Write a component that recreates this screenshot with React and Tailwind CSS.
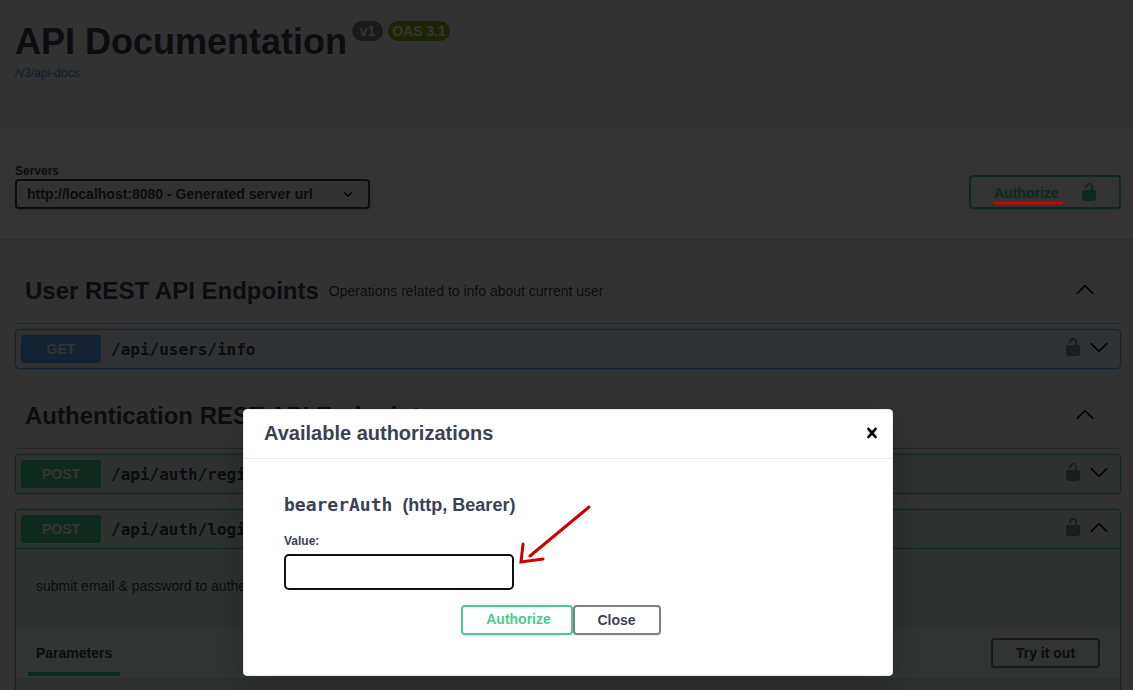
const ICONS = {
  up: "M 17.418 14.908 C 17.69 15.176 18.127 15.176 18.397 14.908 C 18.667 14.64 18.668 14.207 18.397 13.939 L 10.489 6.109 C 10.219 5.841 9.782 5.841 9.51 6.109 L 1.602 13.939 C 1.332 14.207 1.332 14.64 1.602 14.908 C 1.873 15.176 2.311 15.176 2.581 14.908 L 10 7.767 L 17.418 14.908 Z",
  down: "M17.418 6.109c.272-.268.709-.268.979 0s.271.701 0 .969l-7.908 7.83c-.27.268-.707.268-.979 0l-7.908-7.83c-.27-.268-.27-.701 0-.969.271-.268.709-.268.979 0L10 13.25l7.418-7.141z",
  select: "M13.418 7.859c.271-.268.709-.268.978 0 .27.268.272.701 0 .969l-3.908 3.83c-.27.268-.707.268-.979 0l-3.908-3.83c-.27-.267-.27-.701 0-.969.271-.268.709-.268.978 0L10 11l3.418-3.141z",
  unlocked: "M15.8 8H14V5.6C14 2.703 12.665 1 10 1 7.334 1 6 2.703 6 5.6V6h2v-.801C8 3.754 8.797 3 10 3c1.203 0 2 .754 2 2.199V8H4c-.553 0-1 .646-1 1.199V17c0 .549.428 1.139.951 1.307l1.197.387C5.672 18.861 6.55 19 7.1 19h5.8c.549 0 1.428-.139 1.951-.307l1.196-.387c.524-.167.953-.757.953-1.306V9.199C17 8.646 16.352 8 15.8 8z",
  close: "M14.348 14.849c-.469.469-1.229.469-1.697 0L10 11.819l-2.651 3.029c-.469.469-1.229.469-1.697 0-.469-.469-.469-1.229 0-1.697l2.758-3.15-2.759-3.152c-.469-.469-.469-1.228 0-1.697.469-.469 1.228-.469 1.697 0L10 8.183l2.651-3.031c.469-.469 1.228-.469 1.697 0 .469.469.469 1.229 0 1.697l-2.758 3.152 2.758 3.15c.469.469.469 1.229 0 1.698z",
};

function Icon({ name, className = "" }) {
  return (
    <svg viewBox="0 0 20 20" width="20" height="20" fill="currentColor" className={`shrink-0 ${className}`}>
      <path d={ICONS[name]} />
    </svg>
  );
}

function TagHeader({ title, description }) {
  return (
    <div className="flex h-[68px] items-center border-b border-[#3b4151]/30 pr-[26px] pl-2.5">
      <h3 className="pt-0.5 text-2xl font-bold whitespace-nowrap">{title}</h3>
      {description && <span className="ml-2.5 pt-0.5 text-sm">{description}</span>}
      <Icon name="up" className="mb-0.5 ml-auto text-black" />
    </div>
  );
}

function OperationSummary({ method, path, open, methodClass }) {
  return (
    <div className="flex h-[38px] items-center pr-[11px] pl-[5px]">
      <span className={`h-7 w-20 rounded-[3px] text-center text-sm leading-7 font-bold text-white [text-shadow:0_1px_0_rgba(0,0,0,0.1)] ${methodClass}`}>
        {method}
      </span>
      <span className="flex-1 pt-0.5 pl-2.5 font-['DejaVu_Sans_Mono',monospace] text-base font-semibold">{path}</span>
      <Icon name="unlocked" className="mr-1.5 mb-1 text-black/40" />
      <Icon name={open ? "up" : "down"} className="mb-1 text-black" />
    </div>
  );
}

function Page() {
  return (
    <div className="h-full">
      <header className="h-[131px] px-[15px] pt-[21px]">
        <div className="flex items-start">
          <h1 className="text-4xl leading-[41px] font-bold whitespace-nowrap">API Documentation</h1>
          <span className="ml-[5px] h-5 w-[31px] rounded-full bg-[#7d8492] text-center text-sm font-bold text-white">v1</span>
          <span className="ml-[5px] h-5 w-[62px] rounded-full bg-[#89bf04] text-center text-sm font-bold text-white">OAS 3.1</span>
        </div>
        <a className="mt-[3px] block text-xs text-[#4990e2]">/v3/api-docs</a>
      </header>

      <section className="flex h-[108px] justify-between bg-white pr-3 pl-[15px] shadow-[0_1px_2px_rgba(0,0,0,0.15)]">
        <div className="pt-8">
          <div className="text-xs leading-4 font-bold">Servers</div>
          <div className="flex h-[30px] w-[355px] items-center justify-between rounded border-2 border-[#41444e] bg-[#f7f7f7] pr-2.5 pl-2.5 text-sm font-bold shadow-[0_1px_2px_rgba(0,0,0,0.25)]">
            <span>http://localhost:8080 - Generated server url</span>
            <Icon name="select" className="text-black" />
          </div>
        </div>
        <button className="mt-11 flex h-[34px] w-[152px] items-center justify-between rounded border-2 border-[#49cc90] pr-5 pl-[23px] text-sm font-bold text-[#49cc90] shadow-[0_1px_2px_rgba(0,0,0,0.1)]">
          <span className="pt-0.5">Authorize</span>
          <Icon name="unlocked" />
        </button>
      </section>

      <main className="pt-[17px] pr-3 pl-[15px]">
        <TagHeader title="User REST API Endpoints" description="Operations related to info about current user" />
        <div className="mt-[5px] rounded border border-[#61affe] bg-[#61affe]/10 shadow-[0_0_3px_rgba(0,0,0,0.19)]">
          <OperationSummary method="GET" path="/api/users/info" methodClass="bg-[#61affe]" />
        </div>

        <div className="mt-3">
          <TagHeader title="Authentication REST API Endpoints" />
        </div>
        <div className="mt-[5px] rounded border border-[#49cc90] bg-[#49cc90]/10 shadow-[0_0_3px_rgba(0,0,0,0.19)]">
          <OperationSummary method="POST" path="/api/auth/register" methodClass="bg-[#49cc90]" />
        </div>

        <div className="mt-[15px] h-[260px] rounded border border-[#49cc90] bg-[#49cc90]/10 shadow-[0_0_3px_rgba(0,0,0,0.19)]">
          <OperationSummary method="POST" path="/api/auth/login" open methodClass="bg-[#49cc90]" />
          <div className="h-20 border-t border-[#49cc90] px-5 pt-[27px] text-sm">submit email &amp; password to authenticate</div>
          <div className="flex h-[50px] items-center justify-between bg-white/80 pr-5 pl-3 shadow-[0_1px_2px_rgba(0,0,0,0.1)]">
            <h4 className="flex h-full w-[92px] flex-col justify-between pt-[15px] pb-0.5 text-sm font-bold">
              <span className="pl-2">Parameters</span>
              <span className="h-1 bg-[#49cc90]" />
            </h4>
            <button className="h-[30px] w-[109px] rounded border-2 border-[#808080] text-sm font-bold shadow-[0_1px_2px_rgba(0,0,0,0.1)]">
              Try it out
            </button>
          </div>
        </div>
      </main>
    </div>
  );
}

function AuthorizationDialog() {
  return (
    <div className="absolute top-[409px] left-[243px] flex h-[267px] w-[650px] flex-col rounded border border-[#ebebeb] bg-white shadow-[0_10px_30px_rgba(0,0,0,0.2)]">
      <div className="flex h-[49px] items-center justify-between border-b border-[#ebebeb] pr-2.5 pl-5">
        <h3 className="pb-0.5 text-xl font-semibold">Available authorizations</h3>
        <Icon name="close" className="mb-[3px] stroke-black stroke-[0.5] text-black" />
      </div>
      <div className="flex flex-col pt-[34px] pl-10">
        <h4 className="flex items-center text-lg leading-6 font-bold">
          <code className="font-['DejaVu_Sans_Mono',monospace]">bearerAuth</code>
          <span className="pl-2.5">(http, Bearer)</span>
        </h4>
        <label className="mt-4 text-xs leading-4 font-bold">Value:</label>
        <input className="mt-[5px] h-9 w-[230px] rounded-[5px] border-2 border-[#101010] bg-white outline-none" />
        <div className="mt-[15px] flex pl-[177px] text-sm font-bold">
          <button className="h-[30px] w-28 rounded border-2 border-[#49cc90] pb-0.5 pl-[3px] text-[#49cc90] shadow-[0_1px_2px_rgba(0,0,0,0.1)]">Authorize</button>
          <button className="h-[30px] w-[88px] rounded border-2 border-[#808080] pr-px shadow-[0_1px_2px_rgba(0,0,0,0.1)]">Close</button>
        </div>
      </div>
    </div>
  );
}

function Annotations() {
  return (
    <svg viewBox="0 0 1133 690" className="pointer-events-none absolute inset-0 h-full w-full" fill="none" stroke="#cc0000" strokeWidth="3" strokeLinecap="round">
      <path d="M994.500 203H1062" />
      <path d="M589 507L530 556" />
      <path d="M523 544L521 562L543 559" />
    </svg>
  );
}

export default function App() {
  return (
    <div className="relative h-[690px] w-[1133px] overflow-hidden bg-[#fafafa] font-['Liberation_Sans',Arial,sans-serif] text-[#3b4151]">
      <Page />
      <div className="absolute inset-0 bg-black/80" />
      <AuthorizationDialog />
      <Annotations />
    </div>
  );
}
